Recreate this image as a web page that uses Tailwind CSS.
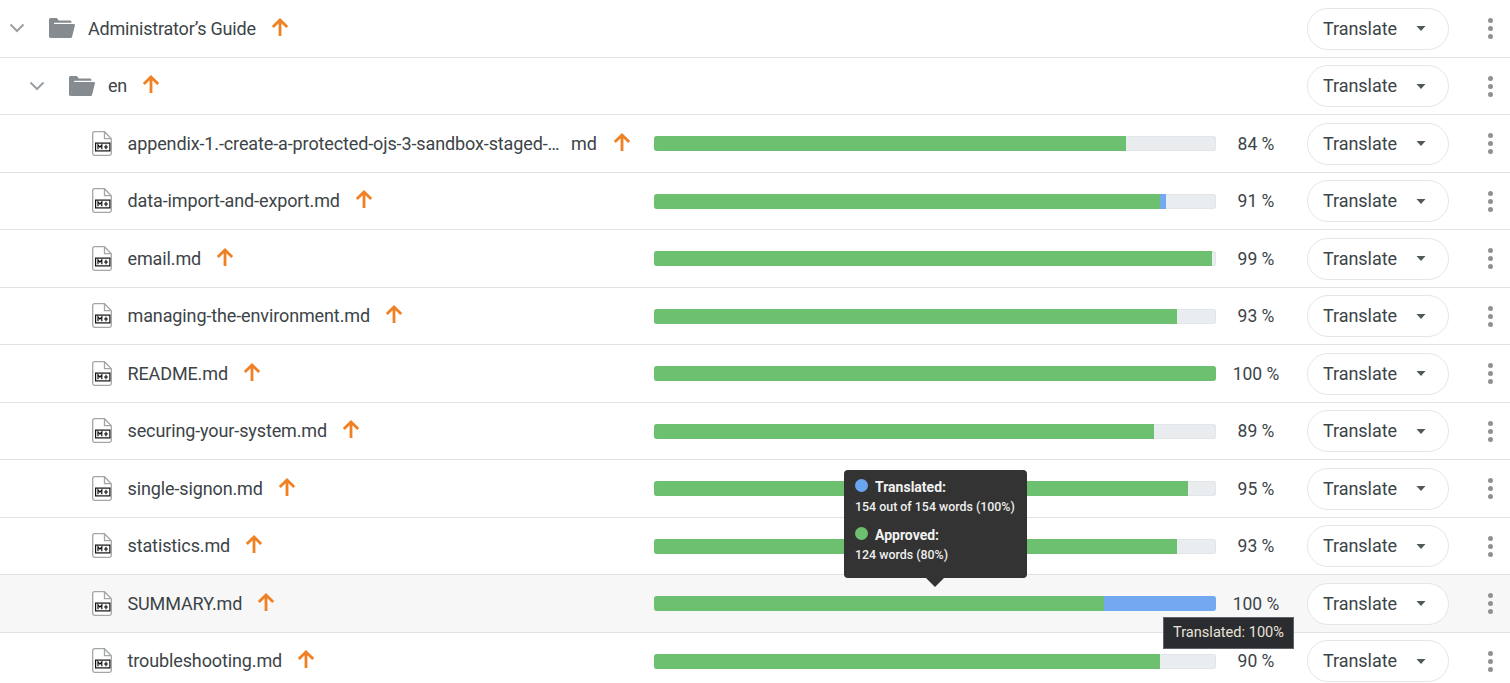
<!DOCTYPE html>
<html lang="en">
<head>
    <meta charset="UTF-8">
    <title>Administrator's Guide</title>
    <script src="https://cdn.jsdelivr.net/npm/@tailwindcss/browser@4"></script>
</head>
<body class="bg-white font-['Roboto',sans-serif] text-[#3c4448] overflow-hidden">
    <div id="list" class="relative w-[1510px] h-[683px] overflow-hidden">
        <!-- hover tooltips -->
        <div class="absolute z-10 left-[844px] top-[470px] w-[183px] h-[108px] bg-[#333333] rounded-[4px] pl-[11px] pt-[7px] text-white">
            <div class="flex items-center gap-[7px] h-[20px]">
                <span class="w-[13px] h-[13px] rounded-full bg-[#6aa5ef] -mt-[3px]"></span>
                <span class="text-[14px] font-bold text-[#f2f2f2]">Translated:</span>
            </div>
            <div class="text-[12.4px] leading-[20px] font-medium text-[#eeeeee]">154 out of 154 words (100%)</div>
            <div class="flex items-center gap-[7px] h-[20px] mt-[8px]">
                <span class="w-[13px] h-[13px] rounded-full bg-[#6cc070] -mt-[3px]"></span>
                <span class="text-[14px] font-bold text-[#f2f2f2]">Approved:</span>
            </div>
            <div class="text-[12.4px] leading-[20px] font-medium text-[#eeeeee]">124 words (80%)</div>
            <div class="absolute left-[82px] top-[108px] w-0 h-0 border-x-[9px] border-x-transparent border-t-[9px] border-t-[#333333]"></div>
        </div>
        <div class="absolute z-10 left-[1163px] top-[617px] w-[131px] h-[32px] bg-[#2a2c30] border border-[#5f6368] flex items-center justify-center text-[14.6px] text-[#e8e4d8]">Translated: 100%</div>
    </div>

    <script>
        const chevron = '<svg class="w-[18px] h-[18px]" viewBox="0 0 18 18" fill="none" stroke="#9aa0a5" stroke-width="2"><path d="M2.500 5.500 9 12l6.500-6.500"/></svg>';
        const folder = '<svg class="w-[26px] h-[20px]" viewBox="0 0 26 20"><path fill="#868b90" d="M1.500 0h6.300l2 2.500H21a1.500 1.500 0 0 1 1.500 1.500v.8H5.300L2.100 18.500 1.500 20A1.500 1.500 0 0 1 0 18.500v-17A1.500 1.500 0 0 1 1.500 0z"/><path fill="#868b90" d="M5.600 6h19.200c.8 0 1.300.7 1.100 1.400l-2.800 11.300c-.2.800-.8 1.300-1.600 1.300H1.500L4.200 7.100C4.400 6.400 4.900 6 5.600 6z"/></svg>';
        const arrow = '<svg class="w-[18px] h-[18px]" viewBox="0 0 18 18" fill="none" stroke="#ef8124" stroke-width="2.800"><path d="M9 18V2.500M1.800 9 9 2l7.200 7"/></svg>';
        const mdIcon = '<svg class="w-[20px] h-[25px]" viewBox="0 0 20 25"><path fill="#fff" stroke="#a3a6a9" stroke-width="1.300" d="M2.500.7h10l6.800 7v14.800a1.800 1.800 0 0 1-1.800 1.800h-15A1.800 1.800 0 0 1 .7 22.500v-20A1.800 1.800 0 0 1 2.500.7z"/><path fill="none" stroke="#a3a6a9" stroke-width="1.300" d="M12.500 1v6.700h6.500"/><rect x="3" y="11.500" width="15.500" height="9" fill="#111"/><rect x="4.200" y="12.700" width="13.100" height="6.600" fill="#fff"/><path fill="none" stroke="#111" stroke-width="1.200" d="M6 18.300v-4.400l1.900 2.200 1.900-2.200v4.400M14 13.800v4.400M12 16h4"/></svg>';
        const caret = '<svg class="w-[10px] h-[5px]" viewBox="0 0 10 5"><path fill="#50585c" d="M.5 0h9L5 5z"/></svg>';
        const dots = '<span class="flex flex-col gap-[3px] items-center"><i class="block w-[5px] h-[5px] rounded-full bg-[#8d9297]"></i><i class="block w-[5px] h-[5px] rounded-full bg-[#8d9297]"></i><i class="block w-[5px] h-[5px] rounded-full bg-[#8d9297]"></i></span>';

        // name, extension kept apart when truncated, approved px, translated px, percent label
        const files = [
            ['appendix-1.-create-a-protected-ojs-3-sandbox-staged-…', 'md', 472, 472, '84 %'],
            ['data-import-and-export.md', '', 506, 512, '91 %'],
            ['email.md', '', 558, 558, '99 %'],
            ['managing-the-environment.md', '', 523, 523, '93 %'],
            ['README.md', '', 562, 562, '100 %'],
            ['securing-your-system.md', '', 500, 500, '89 %'],
            ['single-signon.md', '', 534, 534, '95 %'],
            ['statistics.md', '', 523, 523, '93 %'],
            ['SUMMARY.md', '', 450, 562, '100 %'],
            ['troubleshooting.md', '', 506, 506, '90 %'],
        ];

        function actions() {
            return `<div class="flex-none w-[142px] h-[42px] ml-[11px] rounded-full border border-[#e4e6e8] bg-white flex items-center pl-[15px] text-[18px] tracking-[-0.05px]"><span class="-mt-[1px]">Translate</span><span class="ml-[19px] flex">${caret}</span></div>
                <div class="flex-none w-[61px] pl-[39px] pr-[17px] flex justify-center">${dots}</div>`;
        }

        function folderRow(name, indent) {
            return `<div class="flex items-center h-[57.5px] pt-[1px] border-b border-[#dfe1e3]">
                <div class="flex-1 flex items-center min-w-0 -mt-[1px] ${indent}">
                    ${chevron}<span class="ml-[23px] flex">${folder}</span>
                    <span class="ml-[13px] text-[18px] tracking-[-0.2px]">${name}</span><span class="ml-[15px] flex -mt-[3px]">${arrow}</span>
                </div>
                ${actions()}
            </div>`;
        }

        function fileRow(f, hover) {
            const blue = f[3] - f[2];
            const ext = f[1] ? `<span class="ml-[11.500px]">${f[1]}</span>` : '';
            return `<div class="flex items-center h-[57.5px] pt-[1px] border-b border-[#dfe1e3] ${hover ? 'bg-[#f7f7f7]' : ''}">
                <div class="flex-none w-[654px] flex items-center pl-[92px] -mt-[1px]">
                    ${mdIcon}<span class="ml-[15.500px] text-[18px] tracking-[-0.12px] flex"><span>${f[0]}</span>${ext}</span><span class="${f[1] ? 'ml-[16.500px]' : 'ml-[15px]'} flex -mt-[3px]">${arrow}</span>
                </div>
                <div class="flex-none w-[562px] h-[15px] flex rounded-[3px] bg-[#e9edf0] shadow-[inset_0_0_0_1px_#e3e6e9] overflow-hidden">
                    <div class="bg-[#6cc070]" style="width:${f[2]}px"></div>
                    <div class="bg-[#72a9f0]" style="width:${blue}px"></div>
                </div>
                <div class="flex-none w-[80px] text-center text-[17.500px]">${f[4]}</div>
                ${actions()}
            </div>`;
        }

        const list = document.getElementById('list');
        list.insertAdjacentHTML('beforeend',
            folderRow('Administrator’s Guide', 'pl-[8px]') +
            folderRow('en', 'pl-[28px]') +
            files.map(f => fileRow(f, f[0] === 'SUMMARY.md')).join(''));
    </script>
</body>
</html>
